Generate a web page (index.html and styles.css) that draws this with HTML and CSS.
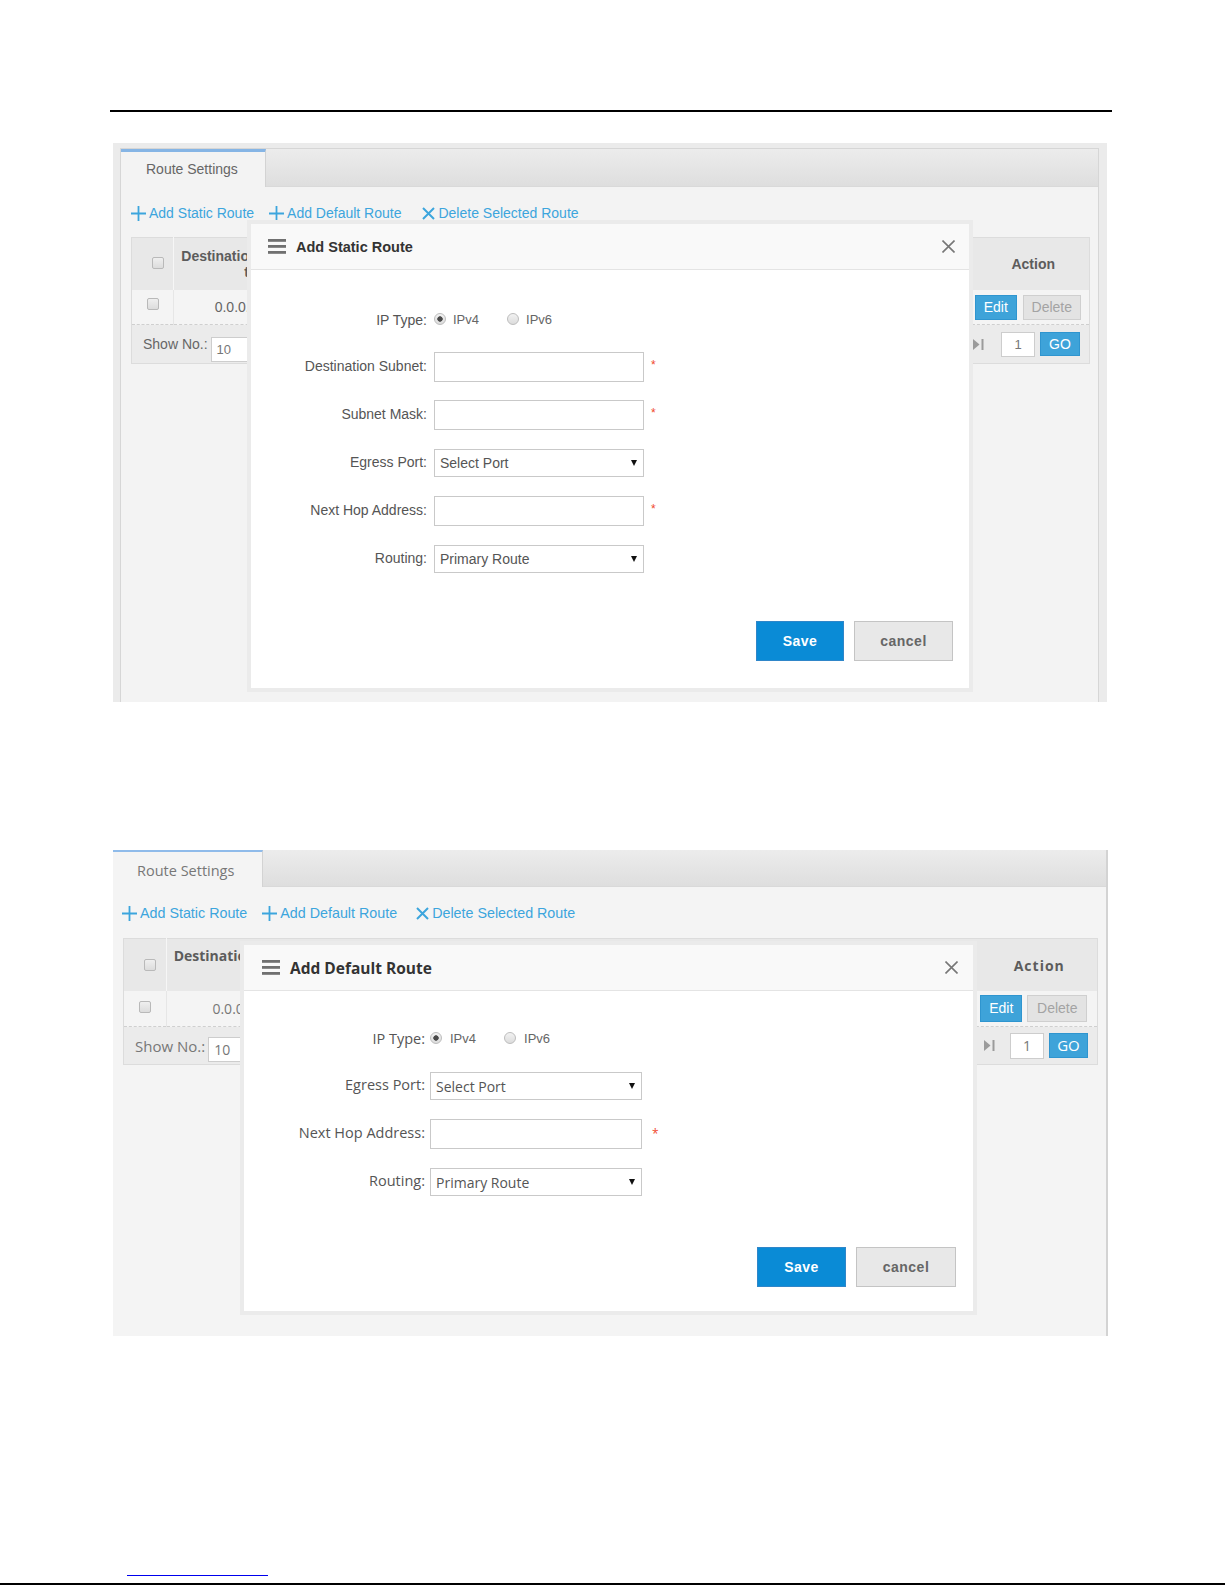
FILE: index.html
```html
<!DOCTYPE html>
<html>
<head>
    <title>Route Settings</title>
    <link rel="stylesheet" href="styles.css">
</head>
<body>
<div class="page">
    <div class="top-rule"></div>

    <!-- Add Static Route -->
    <div class="shot shot-static">
        <div class="panel">
            <div class="tabbar">
                <div class="tab">Route Settings</div>
            </div>
            <div class="toolbar">
                <span class="tool"><svg class="ico-plus" width="15" height="15" viewBox="0 0 15 15"><path d="M7.5 0V15M0 7.5H15" stroke="currentColor" stroke-width="1.8"/></svg>Add Static Route</span>
                <span class="tool"><svg class="ico-plus" width="15" height="15" viewBox="0 0 15 15"><path d="M7.5 0V15M0 7.5H15" stroke="currentColor" stroke-width="1.8"/></svg>Add Default Route</span>
                <span class="tool tool-del"><svg class="ico-x" width="13" height="13" viewBox="0 0 13 13"><path d="M1 1L12 12M12 1L1 12" stroke="currentColor" stroke-width="2"/></svg>Delete Selected Route</span>
            </div>
            <table class="grid">
                <colgroup>
                    <col class="w-check"><col class="w-dest"><col class="w-mask"><col class="w-hop"><col class="w-port"><col class="w-route"><col class="w-action">
                </colgroup>
                <thead>
                    <tr>
                        <th class="c-check"><span class="check"></span></th>
                        <th class="c-dest">Destination to</th>
                        <th></th>
                        <th></th>
                        <th></th>
                        <th></th>
                        <th class="c-action">Action</th>
                    </tr>
                </thead>
                <tbody>
                    <tr>
                        <td class="c-check"><span class="check"></span></td>
                        <td class="c-dest">0.0.0.0</td>
                        <td></td>
                        <td></td>
                        <td></td>
                        <td></td>
                        <td class="c-action"><div class="row-btns"><span class="btn-sm btn-edit">Edit</span><span class="btn-sm btn-del">Delete</span></div></td>
                    </tr>
                </tbody>
                <tfoot>
                    <tr>
                        <td colspan="7">
                            <div class="pager">
                                <span class="pager-label">Show No.:</span>
                                <span class="pager-size">10</span>
                                <div class="pager-right">
                                    <svg class="ico-last" width="11" height="11" viewBox="0 0 11 11"><path d="M0 0L6.5 5.5L0 11Z" fill="currentColor"/><rect x="8.5" y="0" width="2" height="11" fill="currentColor"/></svg>
                                    <span class="pager-page">1</span>
                                    <span class="pager-go">GO</span>
                                </div>
                            </div>
                        </td>
                    </tr>
                </tfoot>
            </table>
        </div>

        <div class="modal">
            <div class="modal-head">
                <svg class="ico-menu" width="18" height="15" viewBox="0 0 18 15"><rect y="0" width="18" height="2.8" fill="currentColor"/><rect y="6" width="18" height="2.8" fill="currentColor"/><rect y="12" width="18" height="2.8" fill="currentColor"/></svg>
                <span class="modal-title">Add Static Route</span>
                <svg class="ico-close" width="13" height="13" viewBox="0 0 13 13"><path d="M0.5 0.5L12.5 12.5M12.5 0.5L0.5 12.5" stroke="currentColor" stroke-width="1.6"/></svg>
            </div>
            <div class="modal-body">
                <div class="form">
                    <div class="form-row ip-row">
                        <span class="form-label">IP Type:</span>
                        <span class="radio"><span class="radio-dot on"></span>IPv4</span>
                        <span class="radio"><span class="radio-dot"></span>IPv6</span>
                    </div>
                    <div class="form-row">
                        <span class="form-label">Destination Subnet:</span>
                        <span class="field"></span>
                        <span class="req">*</span>
                    </div>
                    <div class="form-row">
                        <span class="form-label">Subnet Mask:</span>
                        <span class="field"></span>
                        <span class="req">*</span>
                    </div>
                    <div class="form-row">
                        <span class="form-label">Egress Port:</span>
                        <span class="field select">Select Port<span class="caret"></span></span>
                    </div>
                    <div class="form-row">
                        <span class="form-label">Next Hop Address:</span>
                        <span class="field"></span>
                        <span class="req">*</span>
                    </div>
                    <div class="form-row">
                        <span class="form-label">Routing:</span>
                        <span class="field select">Primary Route<span class="caret"></span></span>
                    </div>
                </div>
                <div class="actions">
                    <span class="btn btn-save">Save</span>
                    <span class="btn btn-cancel">cancel</span>
                </div>
            </div>
        </div>
    </div>

    <!-- Add Default Route -->
    <div class="shot shot-default">
        <div class="panel">
            <div class="tabbar">
                <div class="tab">Route Settings</div>
            </div>
            <div class="toolbar">
                <span class="tool"><svg class="ico-plus" width="15" height="15" viewBox="0 0 15 15"><path d="M7.5 0V15M0 7.5H15" stroke="currentColor" stroke-width="1.8"/></svg>Add Static Route</span>
                <span class="tool"><svg class="ico-plus" width="15" height="15" viewBox="0 0 15 15"><path d="M7.5 0V15M0 7.5H15" stroke="currentColor" stroke-width="1.8"/></svg>Add Default Route</span>
                <span class="tool tool-del"><svg class="ico-x" width="13" height="13" viewBox="0 0 13 13"><path d="M1 1L12 12M12 1L1 12" stroke="currentColor" stroke-width="2"/></svg>Delete Selected Route</span>
            </div>
            <table class="grid">
                <colgroup>
                    <col class="w-check"><col class="w-dest"><col class="w-mask"><col class="w-hop"><col class="w-port"><col class="w-route"><col class="w-action">
                </colgroup>
                <thead>
                    <tr>
                        <th class="c-check"><span class="check"></span></th>
                        <th class="c-dest">Destination to</th>
                        <th></th>
                        <th></th>
                        <th></th>
                        <th></th>
                        <th class="c-action">Action</th>
                    </tr>
                </thead>
                <tbody>
                    <tr>
                        <td class="c-check"><span class="check"></span></td>
                        <td class="c-dest">0.0.0.0</td>
                        <td></td>
                        <td></td>
                        <td></td>
                        <td></td>
                        <td class="c-action"><div class="row-btns"><span class="btn-sm btn-edit">Edit</span><span class="btn-sm btn-del">Delete</span></div></td>
                    </tr>
                </tbody>
                <tfoot>
                    <tr>
                        <td colspan="7">
                            <div class="pager">
                                <span class="pager-label">Show No.:</span>
                                <span class="pager-size">10</span>
                                <div class="pager-right">
                                    <svg class="ico-last" width="11" height="11" viewBox="0 0 11 11"><path d="M0 0L6.5 5.5L0 11Z" fill="currentColor"/><rect x="8.5" y="0" width="2" height="11" fill="currentColor"/></svg>
                                    <span class="pager-page">1</span>
                                    <span class="pager-go">GO</span>
                                </div>
                            </div>
                        </td>
                    </tr>
                </tfoot>
            </table>
        </div>

        <div class="modal">
            <div class="modal-head">
                <svg class="ico-menu" width="18" height="15" viewBox="0 0 18 15"><rect y="0" width="18" height="2.8" fill="currentColor"/><rect y="6" width="18" height="2.8" fill="currentColor"/><rect y="12" width="18" height="2.8" fill="currentColor"/></svg>
                <span class="modal-title">Add Default Route</span>
                <svg class="ico-close" width="13" height="13" viewBox="0 0 13 13"><path d="M0.5 0.5L12.5 12.5M12.5 0.5L0.5 12.5" stroke="currentColor" stroke-width="1.6"/></svg>
            </div>
            <div class="modal-body">
                <div class="form">
                    <div class="form-row ip-row">
                        <span class="form-label">IP Type:</span>
                        <span class="radio"><span class="radio-dot on"></span>IPv4</span>
                        <span class="radio"><span class="radio-dot"></span>IPv6</span>
                    </div>
                    <div class="form-row">
                        <span class="form-label">Egress Port:</span>
                        <span class="field select">Select Port<span class="caret"></span></span>
                    </div>
                    <div class="form-row">
                        <span class="form-label">Next Hop Address:</span>
                        <span class="field"></span>
                        <span class="req">*</span>
                    </div>
                    <div class="form-row">
                        <span class="form-label">Routing:</span>
                        <span class="field select">Primary Route<span class="caret"></span></span>
                    </div>
                </div>
                <div class="actions">
                    <span class="btn btn-save">Save</span>
                    <span class="btn btn-cancel">cancel</span>
                </div>
            </div>
        </div>
    </div>

    <div class="page-foot">
        <span class="foot-link"></span>
        <div class="bottom-rule"></div>
    </div>
</div>
</body>
</html>
```

FILE: styles.css
```css
body {
    margin: 0;
    background: #fff;
}

.page {
    width: 1225px;
    padding-top: 110px;
}

.top-rule {
    margin-left: 110px;
    width: 1002px;
    height: 2px;
    background: #000;
}

/* screenshot frames */

.shot {
    position: relative;
    box-sizing: border-box;
    font-family: "Liberation Sans", Arial, sans-serif;
    font-size: 14px;
}

.shot-static {
    margin: 31px 0 0 113px;
    width: 994px;
    height: 559px;
    padding: 5px 8px 0 7px;
    background: #ebebeb;
}

.shot-default {
    margin: 148px 0 0 113px;
    width: 995px;
    height: 486px;
    font-family: "Open Sans", "Liberation Sans", sans-serif;
}

.panel {
    box-sizing: border-box;
    height: 100%;
    background: #f3f3f3;
    border: 1px solid #d6d6d6;
    border-bottom: 0;
}

.shot-default .panel {
    background: #f4f4f4;
    border: 0;
    border-right: 2px solid #d3d3d3;
}

/* tabs */

.tabbar {
    display: flex;
    box-sizing: border-box;
    height: 38px;
    background: linear-gradient(#ececec, #dedede);
    border-bottom: 1px solid #d9d9d9;
}

.tab {
    box-sizing: border-box;
    width: 145px;
    height: 38px;
    padding-left: 25px;
    border-top: 3px solid #86b5e5;
    border-right: 1px solid #d3d3d3;
    background: #f3f3f3;
    color: #666;
    line-height: 35px;
}

.shot-default .tabbar {
    height: 37px;
}

.shot-default .tab {
    width: 150px;
    height: 37px;
    padding-left: 24px;
    border-top-width: 2px;
    border-top-color: #8fbbea;
    background: #f4f4f4;
    color: #777;
    font-size: 14.5px;
    line-height: 37px;
}

/* toolbar */

.toolbar {
    display: flex;
    align-items: center;
    gap: 15px;
    height: 20px;
    padding: 16px 10px 0;
    color: #3ca5dd;
}

.shot-default .toolbar {
    padding-left: 9px;
    font-family: "Liberation Sans", Arial, sans-serif;
    font-size: 14.3px;
}

.tool {
    display: flex;
    align-items: center;
    gap: 3px;
}

.tool-del {
    margin-left: 6px;
}

.shot-default .tool-del {
    margin-left: 4px;
}

/* table */

.grid {
    width: 958px;
    margin: 14px 10px 0;
    border-collapse: collapse;
    table-layout: fixed;
    border: 1px solid #dcdcdc;
}

.shot-default .grid {
    width: 974px;
    margin: 15px 10px 0;
}

.w-check { width: 42px; }
.w-dest { width: 90px; }
.w-mask { width: 160px; }
.w-hop { width: 170px; }
.w-port { width: 160px; }
.w-route { width: 213px; }
.w-action { width: 123px; }

.shot-default .w-check { width: 43px; }
.shot-default .w-dest { width: 95px; }
.shot-default .w-route { width: 219px; }
.shot-default .w-action { width: 127px; }

.grid th {
    height: 52px;
    padding: 0;
    background: #e8e8e8;
    color: #5c5c5c;
    font-weight: bold;
    text-align: center;
}

.grid td {
    height: 34px;
    padding: 0;
    background: #f4f4f4;
    border-bottom: 1px dashed #cfcfcf;
    color: #666;
    text-align: center;
}

.grid .c-check {
    border-right: 1px solid #f6f6f6;
}

.grid td.c-check {
    border-right-color: #e6e6e6;
}

.shot-default .grid td {
    height: 35px;
    color: #777;
}

.grid .c-dest {
    text-align: right;
    padding-right: 6px;
}

.grid th.c-check {
    padding-left: 10px;
}

.grid th.c-check .check {
    margin-bottom: 3px;
}

.grid td.c-check .check {
    margin-bottom: 6px;
}

.grid th.c-action {
    padding-left: 11px;
}

.shot-default .grid th.c-action {
    letter-spacing: 1px;
}

.check {
    display: inline-block;
    box-sizing: border-box;
    width: 12px;
    height: 12px;
    vertical-align: middle;
    border: 1px solid #b9b9b9;
    border-radius: 2px;
    background: linear-gradient(#efefef, #dcdcdc);
}

.row-btns {
    display: flex;
    justify-content: center;
    gap: 6px;
}

.shot-default .row-btns {
    gap: 5px;
}

.btn-sm {
    box-sizing: border-box;
    height: 25px;
    line-height: 23px;
    font-family: "Liberation Sans", Arial, sans-serif;
    font-size: 14px;
}

.shot-default .btn-sm {
    height: 27px;
    line-height: 25px;
}

.btn-edit {
    width: 42px;
    background: #3ea3d9;
    border: 1px solid #2f95cf;
    color: #fff;
}

.btn-del {
    width: 58px;
    background: #e3e3e3;
    border: 1px solid #cfcfcf;
    color: #a3a3a3;
}

.shot-default .btn-del {
    width: 60px;
}

.grid tfoot td {
    height: auto;
    border: 0;
    border-top: 1px dashed #cfcfcf;
}

.pager {
    display: flex;
    align-items: center;
    height: 38px;
    padding: 0 9px 0 11px;
    background: #ebebeb;
    color: #666;
    text-align: left;
}

.shot-default .pager {
    height: 37px;
    color: #777;
}

.shot-default .pager-label {
    font-size: 15px;
}

.pager-size {
    box-sizing: border-box;
    width: 44px;
    height: 25px;
    margin: 10px 0 0 3px;
    padding-left: 5px;
    line-height: 24px;
    background: #fff;
    border: 1px solid #cdcdcd;
    color: #777;
    font-size: 13px;
}

.shot-default .pager-size {
    margin: 8px 0 0 3px;
    font-size: 14px;
}

.pager-right {
    display: flex;
    align-items: center;
    margin-left: auto;
}

.ico-last {
    color: #9b9b9b;
    margin-right: 17px;
}

.pager-page {
    box-sizing: border-box;
    width: 34px;
    height: 25px;
    line-height: 23px;
    text-align: center;
    background: #fff;
    border: 1px solid #cdcdcd;
    color: #777;
    font-size: 13px;
}

.pager-go {
    box-sizing: border-box;
    width: 40px;
    height: 24px;
    margin-left: 5px;
    line-height: 22px;
    text-align: center;
    background: #3ea3d9;
    border: 1px solid #2f95cf;
    color: #fff;
}

.shot-default .ico-last {
    margin-right: 15px;
}

.shot-default .pager-page {
    height: 26px;
    line-height: 24px;
    font-size: 14px;
}

.shot-default .pager-go {
    width: 39px;
    height: 25px;
    line-height: 23px;
    font-size: 15px;
}

/* modal */

.modal {
    position: absolute;
    left: 134px;
    top: 77px;
    width: 718px;
    border: 4px solid #ebebeb;
    background: #fff;
}

.shot-default .modal {
    left: 127px;
    top: 91px;
    width: 729px;
}

.modal-head {
    display: flex;
    align-items: center;
    height: 46px;
    box-sizing: border-box;
    padding: 0 14px 0 17px;
    background: #f9f9f9;
    border-bottom: 1px solid #e4e4e4;
}

.shot-default .modal-head {
    padding: 0 15px 0 18px;
}

.ico-menu {
    color: #707070;
    margin-right: 10px;
}

.modal-title {
    flex: 1;
    color: #333;
    font-weight: bold;
    font-size: 14.5px;
}

.shot-default .modal-title {
    font-size: 15.5px;
}

.ico-close {
    color: #777;
}

.modal-body {
    padding: 38px 16px 27px 0;
}

.shot-default .modal-body {
    padding: 36px 17px 24px 0;
}

.form {
    display: flex;
    flex-direction: column;
    gap: 18px;
}

.form-row {
    display: flex;
    align-items: center;
    height: 30px;
}

.form-row.ip-row {
    height: 26px;
}

.form-label {
    box-sizing: border-box;
    width: 176px;
    margin-right: 7px;
    padding-bottom: 3px;
    text-align: right;
    color: #555;
}

.shot-default .form-label {
    width: 181px;
    margin-right: 5px;
    font-size: 14.5px;
}

.radio {
    display: flex;
    align-items: center;
    gap: 7px;
    margin-right: 28px;
    padding-bottom: 4px;
    color: #666;
    font-family: "Liberation Sans", Arial, sans-serif;
    font-size: 13px;
}

.shot-default .radio {
    gap: 8px;
}

.radio-dot {
    box-sizing: border-box;
    width: 12px;
    height: 12px;
    border-radius: 50%;
    border: 1px solid #bdbdbd;
    background: linear-gradient(#f2f2f2, #dcdcdc);
}

.radio-dot.on {
    background: radial-gradient(circle, #4a4a4a 0 2.4px, transparent 3px), linear-gradient(#f2f2f2, #dcdcdc);
}

.field {
    box-sizing: border-box;
    width: 210px;
    height: 30px;
    background: #fff;
    border: 1px solid #c9c9c9;
}

.shot-default .field {
    width: 212px;
}

.select {
    display: flex;
    align-items: center;
    justify-content: space-between;
    height: 28px;
    padding: 0 6px 0 5px;
    color: #555;
}

.caret {
    width: 0;
    height: 0;
    border-left: 3px solid transparent;
    border-right: 3px solid transparent;
    border-top: 6px solid #111;
}

.req {
    align-self: flex-start;
    margin: 6px 0 0 7px;
    color: #f0492c;
    font-size: 12px;
}

.shot-default .req {
    margin-left: 10px;
}

.actions {
    display: flex;
    justify-content: flex-end;
    gap: 10px;
    margin-top: 47px;
}

.shot-default .actions {
    margin-top: 50px;
}

.btn {
    display: flex;
    align-items: center;
    justify-content: center;
    box-sizing: border-box;
    height: 40px;
    font-family: "Liberation Sans", Arial, sans-serif;
    font-weight: bold;
    font-size: 14px;
    letter-spacing: 0.5px;
}

.btn-save {
    width: 88px;
    background: #0a8bd6;
    border: 1px solid #2f86c9;
    color: #fff;
}

.btn-cancel {
    width: 99px;
    background: #e8e8e8;
    border: 1px solid #c4c4c4;
    color: #666;
}

.shot-default .btn-save {
    width: 89px;
}

.shot-default .btn-cancel {
    width: 100px;
}

/* page footer */

.page-foot {
    margin-top: 239px;
}

.foot-link {
    display: block;
    margin-left: 127px;
    width: 141px;
    height: 1px;
    background: #0000ee;
}

.bottom-rule {
    margin-top: 7px;
    height: 2px;
    background: #000;
}
```
